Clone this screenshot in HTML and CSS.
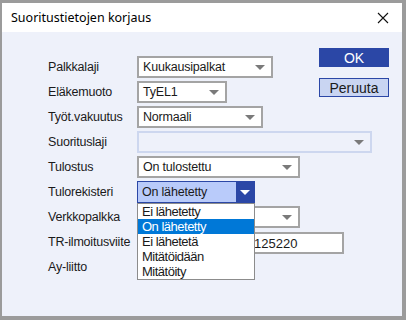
FILE: index.html
```html
<!DOCTYPE html>
<html>
  <head>
    <meta charset="UTF-8" />
    <title>Suoritustietojen korjaus</title>
    <link rel="stylesheet" href="styles.css">
  </head>
  <body>
    <div class="window">
      <div class="titlebar">
        <span class="title">Suoritustietojen korjaus</span>
        <svg class="close" width="12" height="12" viewBox="0 0 12 12">
          <path d="M1 1 L11 11 M11 1 L1 11" stroke="#111" stroke-width="1.1" fill="none" />
        </svg>
      </div>
      <div class="content">
        <div class="form">
          <div class="label">Palkkalaji</div>
          <div class="select w-palkka"><span>Kuukausipalkat</span><i class="arrow"></i></div>

          <div class="label">Eläkemuoto</div>
          <div class="select w-elake"><span>TyEL1</span><i class="arrow"></i></div>

          <div class="label">Työt.vakuutus</div>
          <div class="select w-tyot"><span>Normaali</span><i class="arrow"></i></div>

          <div class="label">Suorituslaji</div>
          <div class="select disabled w-suoritus"><span></span><i class="arrow"></i></div>

          <div class="label">Tulostus</div>
          <div class="select w-tulostus"><span>On tulostettu</span><i class="arrow"></i></div>

          <div class="label">Tulorekisteri</div>
          <div class="combo">
            <div class="select active w-tulorek"><span>On lähetetty</span><b class="btn"><i class="arrow white"></i></b></div>
            <ul class="list">
              <li>Ei lähetetty</li>
              <li class="selected">On lähetetty</li>
              <li>Ei lähetetä</li>
              <li>Mitätöidään</li>
              <li>Mitätöity</li>
            </ul>
          </div>

          <div class="label">Verkkopalkka</div>
          <div class="select w-tulostus"><span></span><i class="arrow"></i></div>

          <div class="label">TR-ilmoitusviite</div>
          <div class="textbox"><span>125220</span></div>

          <div class="label">Ay-liitto</div>
          <div></div>
        </div>
        <div class="buttons">
          <div class="button ok">OK</div>
          <div class="button cancel">Peruuta</div>
        </div>
      </div>
    </div>
  </body>
</html>
```
FILE: styles.css
```css
body {
  margin: 0;
  width: 406px;
  height: 320px;
  box-sizing: border-box;
  padding: 3px 4px 4px 2px;
  background-color: #9b9b9b;
  font-family: "Liberation Sans", Arial, sans-serif;
  font-size: 12.5px;
  letter-spacing: -0.2px;
  color: #1a1a1a;
}

.window {
  height: 313px;
  background-color: #eef1fa;
  display: flex;
  flex-direction: column;
}

.titlebar {
  height: 29px;
  background-color: #ffffff;
  display: flex;
  align-items: center;
  justify-content: space-between;
  padding: 0 13px 0 9px;
}

.title {
  font-family: "Noto Sans", "Open Sans", sans-serif;
  font-size: 12.5px;
  letter-spacing: 0;
  color: #000;
}

.content {
  display: flex;
  padding: 16px 0 0 46px;
}

.form {
  display: grid;
  grid-template-columns: 89px auto;
  grid-auto-rows: 22px;
  row-gap: 3px;
  margin-top: 8px;
  width: 271px;
}

.label {
  display: flex;
  align-items: center;
  white-space: nowrap;
}

.select,
.textbox {
  box-sizing: border-box;
  height: 22px;
  border: 2px solid #a4a4a4;
  background-color: #fff;
  display: flex;
  align-items: center;
  justify-content: space-between;
  padding-left: 4px;
  overflow: hidden;
  white-space: nowrap;
}

.w-palkka { width: 136px; }
.w-elake { width: 90px; }
.w-tyot { width: 126px; }
.w-suoritus { width: 235px; }
.w-tulostus { width: 163px; }
.w-tulorek { width: 118px; }

/* the start of the value is hidden under the open list */
.textbox {
  width: 207px;
  margin: 1px 0 -1px 0;
  padding-left: 115px;
  font-size: 13px;
  letter-spacing: 0;
}

.arrow {
  width: 0;
  height: 0;
  border-left: 5px solid transparent;
  border-right: 5px solid transparent;
  border-top: 5px solid #7a7a7a;
  margin-right: 6px;
}

.arrow.white {
  border-top-color: #ffffff;
  margin: 0;
}

.select.disabled {
  background-color: #eef1fa;
  border-color: #cdd7ef;
}

.select.active {
  border: 1px solid #2b47a6;
  background-color: #b9cbfa;
  padding-left: 4px;
}

.btn {
  width: 18px;
  height: 20px;
  background-color: #2b47a6;
  display: flex;
  align-items: center;
  justify-content: center;
}

.combo {
  position: relative;
}

.list {
  position: absolute;
  left: 0;
  top: 22px;
  z-index: 2;
  width: 118px;
  box-sizing: border-box;
  margin: 0;
  padding: 0;
  list-style: none;
  background-color: #fff;
  border: 1px solid #8c8c8c;
}

.list li {
  height: 15px;
  line-height: 15px;
  padding-left: 4px;
  font-size: 13px;
  letter-spacing: -0.5px;
}

.list li.selected {
  background-color: #0078d7;
  color: #fff;
}

.buttons {
  display: flex;
  flex-direction: column;
  gap: 11px;
}

.button {
  width: 70px;
  height: 19px;
  box-sizing: border-box;
  display: flex;
  align-items: center;
  justify-content: center;
  font-size: 14px;
  letter-spacing: 0;
}

.ok {
  background-color: #2b47a6;
  color: #fff;
}

.cancel {
  background-color: #c9d5f2;
  border: 1px solid #2b47a6;
  color: #1a1a1a;
}
```
